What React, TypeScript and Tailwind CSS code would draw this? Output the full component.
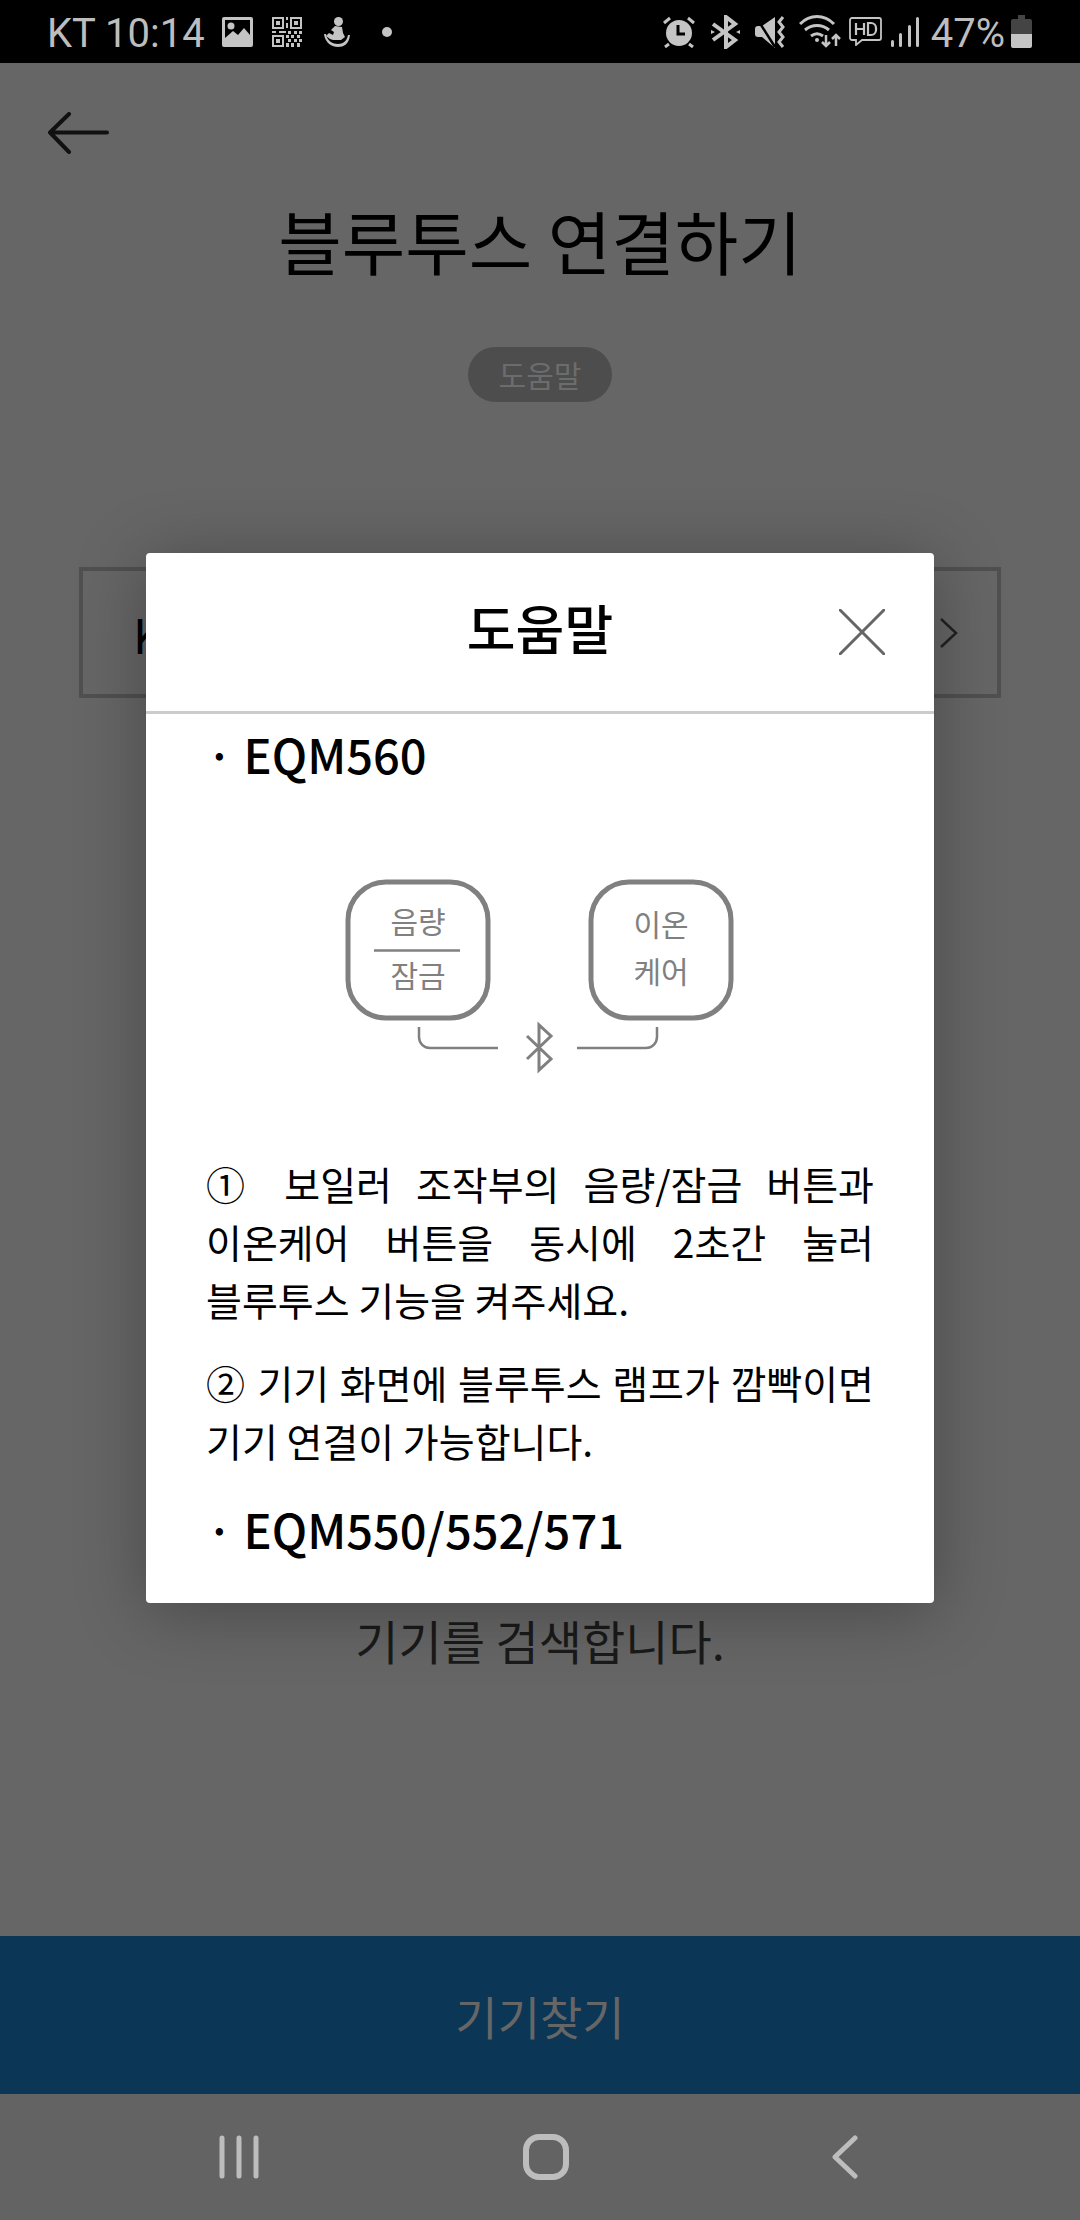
const kr = "font-['Noto_Sans_CJK_KR','Noto_Sans',sans-serif]"

const StatusLeft = () => (
  <div className="flex items-center">
    <span className="ml-[47px] mt-[4px] font-['Roboto',sans-serif] text-[40px] font-normal leading-none text-[#bdbdbd]">KT 10:14</span>
    <svg className="ml-[17px]" width="31" height="30" viewBox="0 0 31 30">
      <path fillRule="evenodd" fill="#c4c4c4" d="M2 0h27a2 2 0 0 1 2 2v26a2 2 0 0 1-2 2H2a2 2 0 0 1-2-2V2a2 2 0 0 1 2-2zM3 3v18l8-7 5 4 6-7 6 7V3z" />
      <circle cx="9" cy="9" r="3.5" fill="#c4c4c4" />
    </svg>
    <svg className="ml-[19px]" width="30" height="30" viewBox="0 0 30 30" fill="#c4c4c4">
      <path fillRule="evenodd" d="M0 0h12v12H0zM2 2v8h8V2zM18 0h12v12H18zM20 2v8h8V2zM0 18h12v12H0zM2 20v8h8v-8z" />
      <path d="M4 4h4v4H4zM22 4h4v4h-4zM4 22h4v4H4zM14 0h2v3h-2zM14 6h2v5h-2zM0 14h4v2H0zM7 14h7v2H7z" />
      <path d="M16 14h3v3h-3zM22 14h3v3h-3zM27 14h3v3h-3zM14 18h3v3h-3zM19 18h3v3h-3zM25 18h3v3h-3zM16 22h3v3h-3zM22 22h3v3h-3zM27 22h3v3h-3zM14 26h3v4h-3zM19 26h3v4h-3zM25 26h3v4h-3z" />
    </svg>
    <svg className="ml-[22px]" width="26" height="30" viewBox="0 0 26 30" fill="#c4c4c4">
      <circle cx="14.5" cy="4.5" r="4.5" />
      <path d="M11 9l7 1 1 6 2 4-4 3H9l-3-1-4-3 3-3 2 1 2 1 1-3-3-2z" />
      <path d="M0 17c1 9 8 13 14 13s11-3 12-12l-2 0c-1 6-5 9-10 9S3 24 2 17z" />
    </svg>
    <div className="ml-[32px] h-[10px] w-[10px] rounded-full bg-[#c4c4c4]" />
  </div>
)

const StatusRight = () => (
  <div className="flex items-center">
    <svg width="34" height="32" viewBox="0 0 34 32">
      <circle cx="17" cy="17" r="13" fill="#c4c4c4" />
      <path d="M16 9v9h7" fill="none" stroke="#000" strokeWidth="3" />
      <path d="M2 7l6-5M32 7l-6-5M7 28l-4 3M27 28l4 3" stroke="#c4c4c4" strokeWidth="3" fill="none" />
    </svg>
    <svg className="ml-[15px]" width="29" height="34" viewBox="0 0 29 34" fill="none">
      <path d="M2 9l22 16-9 7V2l9 7L2 25" stroke="#c4c4c4" strokeWidth="4" />
      <path d="M0 15l4 2-4 2zM29 15l-4 2 4 2z" fill="#c4c4c4" />
    </svg>
    <svg className="ml-[15px]" width="31" height="32" viewBox="0 0 31 32">
      <path d="M3 10h4l13-9v31L7 21H3a3 3 0 0 1-3-3v-5a3 3 0 0 1 3-3z" fill="#c4c4c4" />
      <path d="M1 1l19 30" stroke="#000" strokeWidth="2.5" />
      <path d="M28 1l-4 5 4 5-4 5 4 5-4 5 4 5" stroke="#c4c4c4" strokeWidth="3" fill="none" />
    </svg>
    <svg className="ml-[13px]" width="42" height="33" viewBox="0 0 42 33" fill="none" stroke="#c4c4c4" strokeWidth="3">
      <path d="M1 9c10-10 24-10 34 0" />
      <path d="M6 15c7-6 17-6 24 0" />
      <path d="M12 21c4-3 8-3 12 0" />
      <circle cx="18" cy="25" r="2" fill="#c4c4c4" stroke="none" />
      <path d="M27 20v11M23 27l4 4 4-4M37 31V20M33 24l4-4 4 4" strokeWidth="2.5" />
    </svg>
    <svg className="ml-[8px]" width="33" height="29" viewBox="0 0 33 29" fill="none">
      <path d="M3 1h27a2 2 0 0 1 2 2v18a2 2 0 0 1-2 2H13l-6 5v-5H3a2 2 0 0 1-2-2V3a2 2 0 0 1 2-2z" stroke="#c4c4c4" strokeWidth="1.8" />
      <path d="M7 6v12M15 6v12M7 12h8M19 6v12h3a5 5 0 0 0 5-5v-2a5 5 0 0 0-5-5z" stroke="#c4c4c4" strokeWidth="2.2" />
    </svg>
    <svg className="ml-[9px]" width="28" height="31" viewBox="0 0 28 31" fill="#c4c4c4">
      <rect x="0" y="24" width="3" height="7" rx="1.5" />
      <rect x="8" y="17" width="3" height="14" rx="1.5" />
      <rect x="17" y="9" width="3" height="22" rx="1.5" />
      <rect x="25" y="1" width="3" height="30" rx="1.5" />
    </svg>
    <span className="ml-[12px] mt-[4px] font-['Roboto',sans-serif] text-[40px] font-normal leading-none text-[#bdbdbd]">47%</span>
    <svg className="ml-[6px]" width="21" height="33" viewBox="0 0 21 33">
      <path d="M7 0h7v4h5a2 2 0 0 1 2 2v13H0V6a2 2 0 0 1 2-2h5z" fill="#444" />
      <path d="M0 19h21v12a2 2 0 0 1-2 2H2a2 2 0 0 1-2-2z" fill="#c4c4c4" />
    </svg>
  </div>
)

const BackgroundPage = () => (
  <div className={`flex h-full flex-col bg-[#666666] ${kr}`}>
    <div className="flex h-[63px] shrink-0 items-center justify-between bg-black pr-[48px]">
      <StatusLeft />
      <StatusRight />
    </div>
    <div className="px-[47px] pt-[49px]">
      <svg width="62" height="42" viewBox="0 0 62 42" fill="none" stroke="#111" strokeWidth="4" strokeLinecap="round" strokeLinejoin="round">
        <path d="M60 20.5H3M22 2L3 20.5 22 40" />
      </svg>
    </div>
    <h1 className="mt-[41px] text-center text-[69px] font-normal leading-[90px] text-black">블루투스 연결하기</h1>
    <div className="mt-[62px] flex justify-center">
      <span className="flex h-[55px] w-[144px] items-center justify-center rounded-full bg-[#4d4d4d] text-[30px] text-[#6c6c6c]">도움말</span>
    </div>
    <div className="mx-[79px] mt-[165px] flex h-[131px] items-center justify-between border-[4px] border-[#505050] pl-[50px] pr-[38px]">
      <span className="text-[48px] text-black">K</span>
      <svg width="20" height="30" viewBox="0 0 20 30" fill="none" stroke="#222" strokeWidth="2.5">
        <path d="M2 1l15 14L2 29" />
      </svg>
    </div>
    <p className="mt-[907px] text-center text-[47px] leading-[70px] text-[#1a1a1a]">기기를 검색합니다.</p>
    <div className="flex-1" />
    <div className="flex h-[158px] shrink-0 items-center justify-center bg-[#0b3656] text-[46px] text-[#666666]">기기찾기</div>
    <div className="flex h-[126px] shrink-0 items-center justify-between bg-[#636363] pl-[219px] pr-[222px]">
      <svg width="40" height="44" viewBox="0 0 40 44" stroke="#bdbdbd" strokeWidth="5" strokeLinecap="round">
        <path d="M3 3v38M20 3v38M37 3v38" />
      </svg>
      <svg width="46" height="46" viewBox="0 0 46 46" fill="none" stroke="#bdbdbd" strokeWidth="6">
        <rect x="3" y="3" width="40" height="40" rx="13" />
      </svg>
      <svg width="26" height="44" viewBox="0 0 26 44" fill="none" stroke="#bdbdbd" strokeWidth="5" strokeLinecap="round" strokeLinejoin="round">
        <path d="M23 3L3 22l20 19" />
      </svg>
    </div>
  </div>
)

const PairingDiagram = () => (
  <svg width="788" height="220" viewBox="146 860 788 220" className="block" fill="none">
    <rect x="348" y="882" width="140" height="136" rx="38" stroke="#808080" strokeWidth="5" />
    <rect x="591" y="882" width="140" height="136" rx="38" stroke="#808080" strokeWidth="5" />
    <path d="M374 950.5h86" stroke="#808080" strokeWidth="2.5" />
    <g fill="#808080" fontSize="30" textAnchor="middle">
      <text x="418" y="933">음량</text>
      <text x="418" y="987">잠금</text>
      <text x="661" y="936">이온</text>
      <text x="661" y="983">케어</text>
    </g>
    <path d="M419 1027v10a11 11 0 0 0 11 11h68M577 1048h69a11 11 0 0 0 11-11v-10" stroke="#808080" strokeWidth="2.5" />
    <path d="M527 1036l24 23-12 11v-45l12 11-24 23" stroke="#808080" strokeWidth="3" />
  </svg>
)

const HelpModal = () => (
  <div className={`absolute left-[146px] top-[553px] flex h-[1050px] w-[788px] flex-col rounded-[4px] bg-white shadow-[0_8px_70px_rgba(0,0,0,0.3)] ${kr}`}>
    <div className="relative flex h-[161px] shrink-0 items-center justify-center border-b-[3px] border-[#cccccc] pb-[8px]">
      <span className="text-[53px] font-medium text-black">도움말</span>
      <svg className="absolute left-[693px] top-[56px]" width="46" height="46" viewBox="0 0 46 46" stroke="#666" strokeWidth="3" strokeLinecap="round">
        <path d="M1 1l44 44M45 1L1 45" />
      </svg>
    </div>
    <div className="flex-1 overflow-hidden">
      <h2 className="ml-[60px] mt-[9px] text-[47px] font-medium leading-[62px] text-black">· EQM560</h2>
      <div className="mt-[75px]">
        <PairingDiagram />
      </div>
      <div className="mx-[60px] mt-[74px] text-justify text-[39px] leading-[58px] text-black break-keep">
        <p>① 보일러 조작부의 음량/잠금 버튼과 이온케어 버튼을 동시에 2초간 눌러 블루투스 기능을 켜주세요.</p>
        <p className="mt-[25px]">② 기기 화면에 블루투스 램프가 깜빡이면 기기 연결이 가능합니다.</p>
      </div>
      <h2 className="ml-[60px] mt-[29px] text-[47px] font-medium leading-[62px] text-black">· EQM550/552/571</h2>
    </div>
  </div>
)

export default function App() {
  return (
    <div className="relative h-[2220px] w-[1080px] overflow-hidden">
      <BackgroundPage />
      <HelpModal />
    </div>
  )
}
